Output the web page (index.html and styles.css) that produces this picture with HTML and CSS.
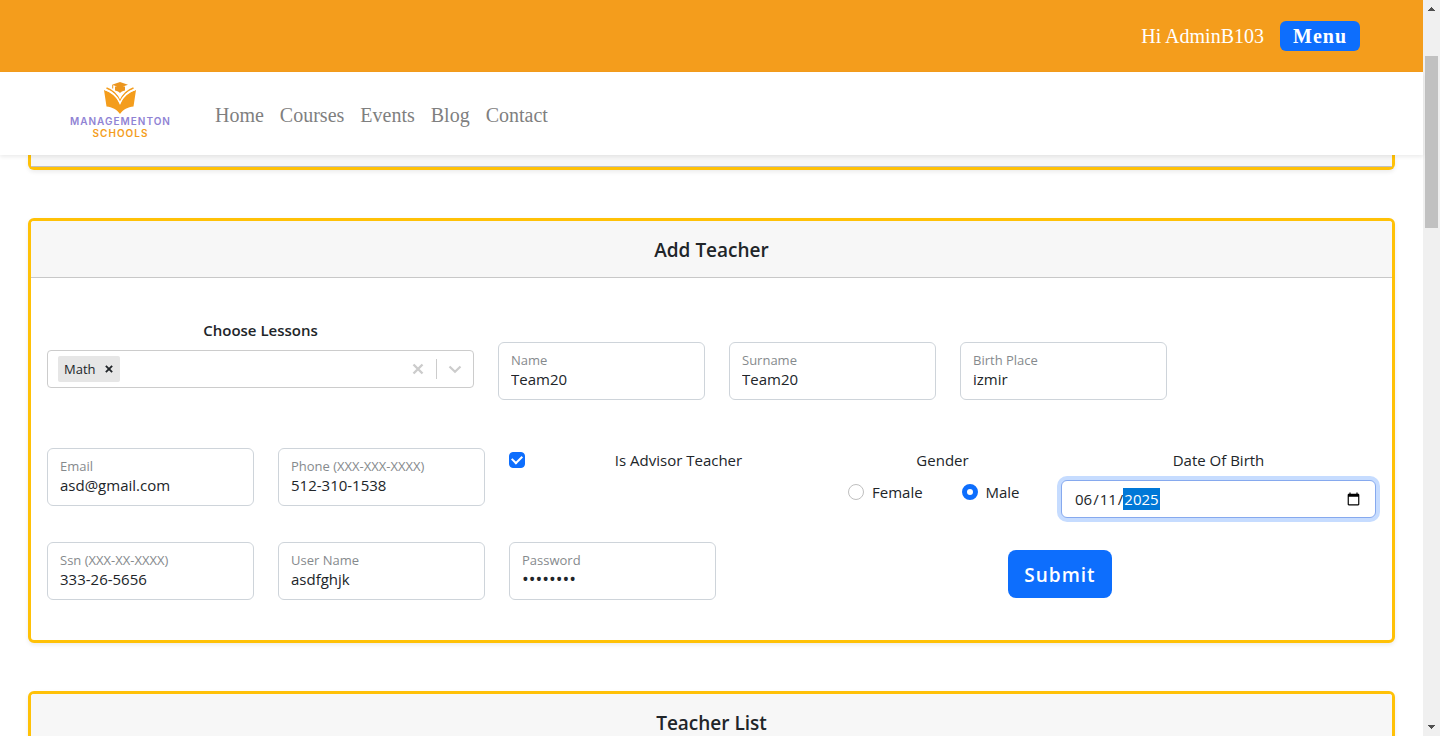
FILE: index.html
```html
<!DOCTYPE html>
<html lang="en">
<head>
<meta charset="utf-8">
<title>Managementon Schools - Teachers</title>
<link rel="stylesheet" href="styles.css">
</head>
<body>
<div class="viewport">
  <div class="page">
    <header class="topbar">
      <span>Hi AdminB103</span>
      <button type="button" class="btn btn-menu">Menu</button>
    </header>
    <nav class="navbar">
      <a href="#" class="brand">
        <svg class="brand-mark" viewBox="0 0 32 32" aria-hidden="true">
          <path d="M0 8C8 10 13 15 16 22C19 15 24 10 32 8L29.500 24.500C24 25 19 27.500 16 32C13 27.500 8 25 2.500 24.500Z" fill="#f49d1c"/>
          <path d="M2.500 6C9.500 8.500 13.500 13 16 19C18.500 13 22.500 8.500 29.500 6" fill="none" stroke="#f49d1c" stroke-width="1.600"/>
          <path d="M1 7.500C8.500 10 13.500 15 16 21C18.500 15 23.500 10 31 7.500" fill="none" stroke="#fff" stroke-width="1.600"/>
          <path d="M16 0L24 2.800L16 5.600L8 2.800ZM11 4.400H21V8.500C18.500 9 17 10 16 11C15 10 13.500 9 11 8.500ZM8.200 2.800H9.200V6.500H8.200Z" fill="#ec961f"/>
        </svg>
        <span class="brand-name">MANAGEMENTON</span>
        <span class="brand-sub">SCHOOLS</span>
      </a>
      <ul class="nav-links">
        <li><a href="#">Home</a></li>
        <li><a href="#">Courses</a></li>
        <li><a href="#">Events</a></li>
        <li><a href="#">Blog</a></li>
        <li><a href="#">Contact</a></li>
      </ul>
    </nav>
    <main class="content">
      <section class="card card-collapsed"><div class="card-tail"></div></section>

      <section class="card">
        <h2 class="card-header">Add Teacher</h2>
        <form class="card-body">
          <div class="row row-lessons">
            <div class="lessons">
              <label class="lessons-label" for="lessons">Choose Lessons</label>
              <div class="multi">
                <span class="chip">Math
                  <button type="button" class="icon-btn" aria-label="Remove Math">
                    <svg width="14" height="14" viewBox="0 0 20 20"><path d="M5.500 5.500L14.500 14.500M14.500 5.500L5.500 14.500" stroke="#212529" stroke-width="2.600"/></svg>
                  </button>
                </span>
                <input id="lessons" class="multi-input" type="text">
                <button type="button" class="icon-btn multi-icon" aria-label="Clear">
                  <svg width="20" height="20" viewBox="0 0 20 20"><path d="M5.500 5.500L14.500 14.500M14.500 5.500L5.500 14.500" stroke="#ccc" stroke-width="2.400"/></svg>
                </button>
                <span class="multi-sep"></span>
                <button type="button" class="icon-btn multi-icon" aria-label="Open">
                  <svg width="20" height="20" viewBox="0 0 20 20"><path d="M4.500 7.500L10 12.800L15.500 7.500" fill="none" stroke="#ccc" stroke-width="2.200"/></svg>
                </button>
              </div>
            </div>
            <div class="field field-low"><label for="name">Name</label><input id="name" type="text" value="Team20"></div>
            <div class="field field-low"><label for="surname">Surname</label><input id="surname" type="text" value="Team20"></div>
            <div class="field field-low"><label for="place">Birth Place</label><input id="place" type="text" value="izmir"></div>
          </div>

          <div class="row row-details">
            <div class="field"><label for="email">Email</label><input id="email" type="email" value="asd@gmail.com"></div>
            <div class="field"><label for="phone">Phone (XXX-XXX-XXXX)</label><input id="phone" type="text" value="512-310-1538"></div>
            <div class="check advisor">
              <input id="advisor" type="checkbox" class="tick" checked>
              <label for="advisor">Is Advisor Teacher</label>
            </div>
            <fieldset class="gender">
              <legend>Gender</legend>
              <div class="gender-options">
                <div class="check"><input id="female" type="radio" name="gender" class="dot"><label for="female">Female</label></div>
                <div class="check"><input id="male" type="radio" name="gender" class="dot" checked><label for="male">Male</label></div>
              </div>
            </fieldset>
            <div class="birth">
              <label for="birth">Date Of Birth</label>
              <input id="birth" class="date" type="date" value="2025-06-11">
            </div>
          </div>

          <div class="row row-account">
            <div class="field"><label for="ssn">Ssn (XXX-XX-XXXX)</label><input id="ssn" type="text" value="333-26-5656"></div>
            <div class="field"><label for="user">User Name</label><input id="user" type="text" value="asdfghjk"></div>
            <div class="field"><label for="password">Password</label><input id="password" class="secret" type="password" value="12345678"></div>
            <div class="actions"><button type="submit" class="btn btn-submit">Submit</button></div>
          </div>
        </form>
      </section>

      <section class="card">
        <h2 class="card-header">Teacher List</h2>
        <div class="card-body"></div>
      </section>
    </main>
  </div>
  <div class="scrollbar" aria-hidden="true">
    <svg width="17" height="17" viewBox="0 0 17 17"><path d="M8 7H9V8H10V9H11V10H12V11H5V10H6V9H7V8H8Z" fill="#505050"/></svg>
    <div class="scroll-thumb"></div>
    <svg class="scroll-down" width="17" height="17" viewBox="0 0 17 17"><path d="M5 6H12V7H11V8H10V9H9V10H8V9H7V8H6V7H5Z" fill="#505050"/></svg>
  </div>
</div>
</body>
</html>
```
FILE: styles.css
```css
* { box-sizing: border-box; }

body {
  margin: 0;
  background: #fff;
  color: #212529;
  font-family: "Open Sans", "Noto Sans", sans-serif;
  font-size: 15px;
  line-height: 24px;
}

button, input { font: inherit; color: inherit; }

.viewport {
  display: flex;
  height: 100vh;
  overflow: hidden;
}

.page {
  flex: 1;
  min-width: 0;
  display: flex;
  flex-direction: column;
}

.topbar {
  flex: none;
  display: flex;
  align-items: center;
  justify-content: flex-end;
  gap: 16px;
  padding: 21px 63px 21px 0;
  background: #f49d1c;
  color: #fff;
  font: 20px/30px "Liberation Serif", serif;
}

.btn {
  border: 0;
  background: #0d6efd;
  color: #fff;
  letter-spacing: 1px;
  cursor: pointer;
}

.btn-menu {
  padding: 0 13px;
  border-radius: 6px;
  font-weight: 700;
}

.navbar {
  flex: none;
  position: relative;
  z-index: 1;
  display: flex;
  align-items: center;
  gap: 44px;
  padding: 10px 70px 16px;
  background: #fff;
  box-shadow: 0 2px 4px rgba(0, 0, 0, 0.08);
}

.brand {
  display: flex;
  flex-direction: column;
  align-items: center;
  text-decoration: none;
  font-family: Inter, "Open Sans", sans-serif;
  font-size: 10px;
  line-height: 12px;
  font-weight: 600;
  letter-spacing: 1px;
}

.brand-mark { width: 32px; height: 32px; margin-bottom: 1px; }
.brand-name { color: #9083d4; }
.brand-sub { color: #f49d1c; }

.nav-links {
  display: flex;
  gap: 16px;
  margin: 0;
  padding: 8px 0 0;
  list-style: none;
  font: 20px/30px "Liberation Serif", serif;
}

.nav-links a { color: #7f7f7f; text-decoration: none; }

.content {
  flex: 1;
  min-height: 0;
  overflow: hidden;
  display: flex;
  flex-direction: column;
  gap: 48px;
  padding: 0 28px;
}

.card {
  flex: none;
  border: 3px solid #ffc107;
  border-radius: 6px;
  background: #fff;
  box-shadow: 0 2px 4px rgba(0, 0, 0, 0.08);
}

.card-collapsed {
  border-top: 0;
  border-top-left-radius: 0;
  border-top-right-radius: 0;
}

.card-tail {
  height: 12px;
  border-bottom: 1px solid #c0c0c0;
  background: #f7f7f7;
}

.card-header {
  margin: 0;
  padding: 17px 16px 15px;
  border-bottom: 1px solid #c8c8c8;
  border-radius: 3px 3px 0 0;
  background: #f7f7f7;
  font-size: 19px;
  line-height: 24px;
  font-weight: 600;
  text-align: center;
}

.card-body { padding: 40px 16px; }

.row {
  display: grid;
  column-gap: 24px;
  align-items: start;
}

.row-lessons { grid-template-columns: 427fr 207fr 207fr 207fr 185fr; margin-bottom: 48px; }
.row-details { grid-template-columns: 207fr 207fr 315fr 189fr 315fr; margin-bottom: 24px; }
.row-account { grid-template-columns: 207fr 207fr 207fr 636fr; }

.lessons-label {
  display: block;
  margin-bottom: 8px;
  font-weight: 600;
  text-align: center;
}

.multi {
  display: flex;
  align-items: center;
  height: 38px;
  padding: 0 8px 0 10px;
  border: 1px solid #ccc;
  border-radius: 4px;
}

.chip {
  display: flex;
  align-items: center;
  gap: 6px;
  height: 26px;
  padding: 0 4px 0 6px;
  border-radius: 2px;
  background: #e6e6e6;
  font-size: 13px;
}

.multi-input {
  flex: 1;
  min-width: 0;
  border: 0;
  outline: 0;
  background: none;
}

.icon-btn {
  display: flex;
  padding: 0;
  border: 0;
  background: none;
}

.multi-sep { width: 1px; height: 20px; margin: 0 8px; background: #ccc; }

.field {
  display: flex;
  flex-direction: column;
  height: 58px;
  padding: 8px 12px;
  border: 1px solid #ced4da;
  border-radius: 6px;
}

.field-low { margin-top: 24px; }

.field label {
  color: #868a8d;
  font-size: 13px;
  line-height: 18px;
  white-space: nowrap;
}

.field input {
  width: 100%;
  height: 20px;
  padding: 0;
  border: 0;
  outline: 0;
  background: none;
}

.field .secret { font-size: 18px; }

.check {
  display: flex;
  align-items: center;
  gap: 8px;
}

.advisor label { flex: 1; text-align: center; }

.tick, .dot {
  appearance: none;
  flex: none;
  width: 16px;
  height: 16px;
  margin: 0;
  border: 1px solid #bfbfbf;
  background: #fff;
}

.tick { display: grid; place-items: center; border-radius: 4px; }
.tick:checked { border-color: #0d6efd; background: #0d6efd; }

.tick:checked::before {
  content: "";
  width: 8px;
  height: 5px;
  margin-bottom: 3px;
  border: solid #fff;
  border-width: 0 0 2px 2px;
  transform: rotate(-45deg);
}

.dot { border-radius: 50%; }
.dot:checked { border: 5px solid #0d6efd; }

.gender {
  min-width: 0;
  margin: 0;
  padding: 0;
  border: 0;
  text-align: center;
}

.gender legend { width: 100%; padding: 0; }

.gender-options {
  display: grid;
  grid-template-columns: 1fr 1fr;
  gap: 38px;
  padding-top: 8px;
}

.birth {
  display: flex;
  flex-direction: column;
  gap: 8px;
  text-align: center;
}

.date {
  width: 100%;
  height: 38px;
  padding: 6px 12px;
  border: 1px solid #86a9ee;
  border-radius: 6px;
  outline: 0;
  background: #fff;
  box-shadow: 0 0 0 4px #c6dcff;
}

.date::-webkit-datetime-edit-year-field { background: #0078d7; color: #fff; }

.actions { display: flex; justify-content: center; padding: 8px 0 0 4px; }

.btn-submit {
  padding: 10px 16px 8px;
  border-radius: 8px;
  font-size: 19px;
  line-height: 30px;
  font-weight: 600;
}

.scrollbar {
  flex: none;
  display: flex;
  flex-direction: column;
  align-items: center;
  width: 17px;
  background: #f0f0f0;
}

.scroll-thumb {
  width: 13px;
  height: 172px;
  margin-top: 39px;
  background: #c1c1c1;
}

.scroll-down { margin-top: auto; }
```
